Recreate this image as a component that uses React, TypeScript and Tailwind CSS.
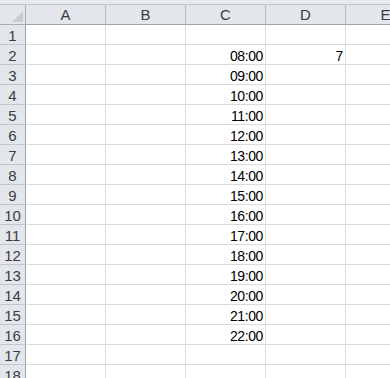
const cols = ["A", "B", "C", "D", "E"];

const times = [
  "08:00", "09:00", "10:00", "11:00", "12:00", "13:00", "14:00", "15:00",
  "16:00", "17:00", "18:00", "19:00", "20:00", "21:00", "22:00",
];

type Row = { n: number; c?: string; d?: string };

const rows: Row[] = Array.from({ length: 18 }, (_, i) => {
  const n = i + 1;
  const t = n >= 2 && n <= 16 ? times[n - 2] : undefined;
  return { n, c: t, d: n === 2 ? "7" : undefined };
});

function Cell({ value }: { value?: string }) {
  return (
    <div className="flex h-[20px] w-[80px] shrink-0 items-end justify-end border-r border-b border-[#d9d9d9] bg-white pr-[2px] text-[14px] leading-4 tracking-[-0.4px] text-black">
      {value}
    </div>
  );
}

export default function App() {
  return (
    <div
      className="h-[378px] w-[390px] overflow-hidden bg-white"
      style={{ fontFamily: '"Liberation Sans", Arial, sans-serif' }}
    >
      <div className="h-[5px] w-[430px] border-b border-[#c3c7cc] bg-[#e8ebee]" />

      <div className="flex w-[430px]">
        <div className="relative h-[20px] w-[26px] shrink-0 border-r border-b border-[#a9aeb4] bg-[#e3e7ec]">
          <svg className="absolute right-[2px] bottom-[2px]" width="11" height="11" viewBox="0 0 11 11">
            <polygon points="11,0 11,11 0,11" fill="#c8ccd2" />
          </svg>
        </div>
        {cols.map((c) => (
          <div
            key={c}
            className="flex h-[20px] w-[80px] shrink-0 items-end justify-center border-r border-b border-r-[#b8bcc2] border-b-[#9ea3a9] bg-[#e3e7ec] pb-[1px] text-[15px] leading-4 text-[#3c3c3c]"
          >
            {c}
          </div>
        ))}
      </div>

      {rows.map((r) => (
        <div key={r.n} className="flex w-[430px]">
          <div className="flex h-[20px] w-[26px] shrink-0 items-end justify-center border-r border-b border-r-[#9ea3a9] border-b-[#c3c7cc] bg-[#e3e7ec] text-[15px] leading-4 text-[#3c3c3c]">
            {r.n}
          </div>
          <Cell />
          <Cell />
          <Cell value={r.c} />
          <Cell value={r.d} />
          <Cell />
        </div>
      ))}
    </div>
  );
}
